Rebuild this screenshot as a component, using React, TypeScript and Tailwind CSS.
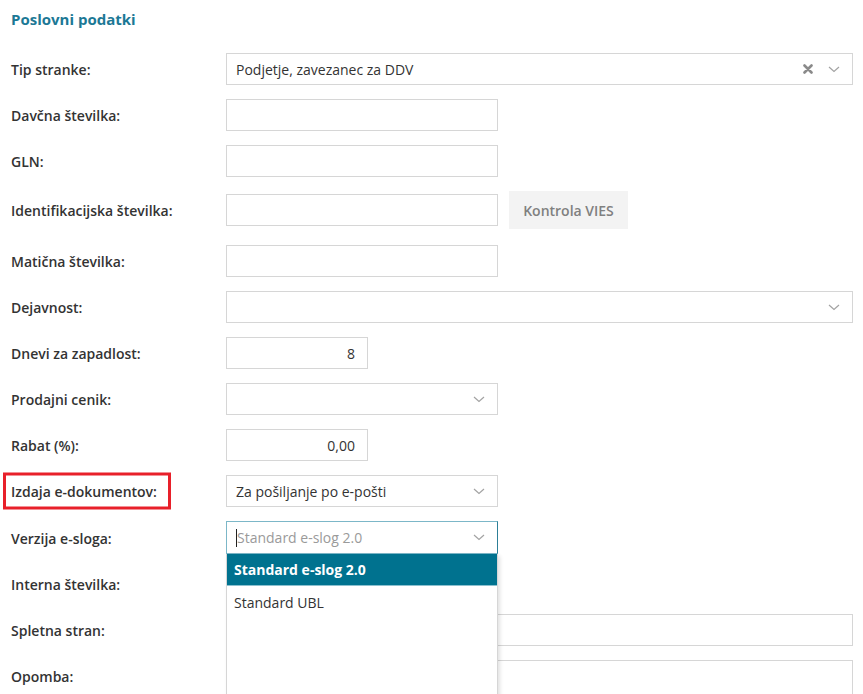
import { ReactNode } from "react";

const Chevron = () => (
  <svg width="12" height="7" viewBox="0 0 12 7" fill="none" className="shrink-0">
    <path d="M1 1l5 4.5L11 1" stroke="#a3a3a3" strokeWidth="1.2" />
  </svg>
);

const Clear = () => (
  <svg width="10" height="10" viewBox="0 0 10 10" className="shrink-0">
    <path d="M1.5 1.5l7 7M8.5 1.5l-7 7" stroke="#8a8a8a" strokeWidth="2.6" strokeLinecap="round" />
  </svg>
);

function Row({
  label,
  children,
  boxed,
  className = "",
  labelClass = "",
}: {
  label: string;
  children?: ReactNode;
  boxed?: boolean;
  className?: string;
  labelClass?: string;
}) {
  return (
    <div className={`flex items-center ${className}`}>
      <div className={`w-[215px] shrink-0 relative ${labelClass}`}>
        {boxed && <div className="absolute -left-[8px] top-1/2 -translate-y-1/2 w-[168px] h-[37px] border-[3px] border-[#e8202a]" />}
        <span className="relative font-semibold text-[14px] text-[#333]">{label}</span>
      </div>
      {children}
    </div>
  );
}

const inputCls = "h-[32px] bg-white border border-[#d6d6d6] text-[14px] text-[#333] px-[9px] flex items-center";

export default function App() {
  return (
    <div className="w-[863px] h-[694px] overflow-hidden bg-white pl-[11px] pr-[10px] pt-[9px] font-['Open_Sans',sans-serif]">
      <h2 className="text-[15px] font-bold text-[#1c7895] leading-[20px] mb-[24px]">Poslovni podatki</h2>

      <div className="flex flex-col gap-[14px]">
        <Row label="Tip stranke:">
          <div className={`${inputCls} flex-1 justify-between pr-[12px]`}>
            <span>Podjetje, zavezanec za DDV</span>
            <div className="flex items-center gap-[15px]">
              <Clear />
              <Chevron />
            </div>
          </div>
        </Row>
        <Row label="Davčna številka:">
          <div className={`${inputCls} w-[272px]`} />
        </Row>
        <Row label="GLN:">
          <div className={`${inputCls} w-[272px]`} />
        </Row>
        <Row label="Identifikacijska številka:">
          <div className={`${inputCls} w-[272px]`} />
          <div className="ml-[11px] w-[119px] h-[38px] bg-[#f3f3f3] flex items-center justify-center text-[14px] font-semibold text-[#808080]">
            Kontrola VIES
          </div>
        </Row>
        <Row label="Matična številka:" className="mt-[2px]">
          <div className={`${inputCls} w-[272px]`} />
        </Row>
        <Row label="Dejavnost:">
          <div className={`${inputCls} flex-1 justify-end pr-[12px]`}>
            <Chevron />
          </div>
        </Row>
        <Row label="Dnevi za zapadlost:">
          <div className={`${inputCls} w-[142px] justify-end pr-[12px]`}>8</div>
        </Row>
        <Row label="Prodajni cenik:">
          <div className={`${inputCls} w-[272px] justify-end pr-[12px]`}>
            <Chevron />
          </div>
        </Row>
        <Row label="Rabat (%):">
          <div className={`${inputCls} w-[142px] justify-end pr-[12px]`}>0,00</div>
        </Row>
        <Row label="Izdaja e-dokumentov:" boxed>
          <div className={`${inputCls} w-[272px] justify-between pr-[12px]`}>
            <span>Za pošiljanje po e-pošti</span>
            <Chevron />
          </div>
        </Row>
        <Row label="Verzija e-sloga:">
          <div className="relative w-[272px]">
            <div className="h-[33px] bg-white border border-[#7cb7c8] border-r-[#2d7f97] flex items-center justify-between pl-[9px] pr-[12px] text-[14px]">
              <span className="flex items-center">
                <span className="w-px h-[18px] bg-[#222]" />
                <span className="text-[#9a9a9a]">Standard e-slog 2.0</span>
              </span>
              <Chevron />
            </div>
            <div className="absolute left-0 top-[33px] w-[272px] h-[160px] bg-white border border-[#d6d6d6] border-t-0 shadow-[2px_2px_4px_rgba(0,0,0,0.12)] z-10">
              <div className="h-[32px] bg-[#00728f] border-b border-[#8cc0cf] flex items-center pl-[7px] text-[14px] font-bold text-white">
                Standard e-slog 2.0
              </div>
              <div className="h-[32px] flex items-center pl-[7px] text-[14px] text-[#333]">Standard UBL</div>
            </div>
          </div>
        </Row>
        <Row label="Interna številka:">
          <div className={`${inputCls} w-[272px]`} />
        </Row>
        <Row label="Spletna stran:">
          <div className={`${inputCls} flex-1`} />
        </Row>
        <Row label="Opomba:" className="items-start" labelClass="pt-[4px]">
          <div className="flex-1 h-[80px] bg-white border border-[#d6d6d6]" />
        </Row>
      </div>
    </div>
  );
}
